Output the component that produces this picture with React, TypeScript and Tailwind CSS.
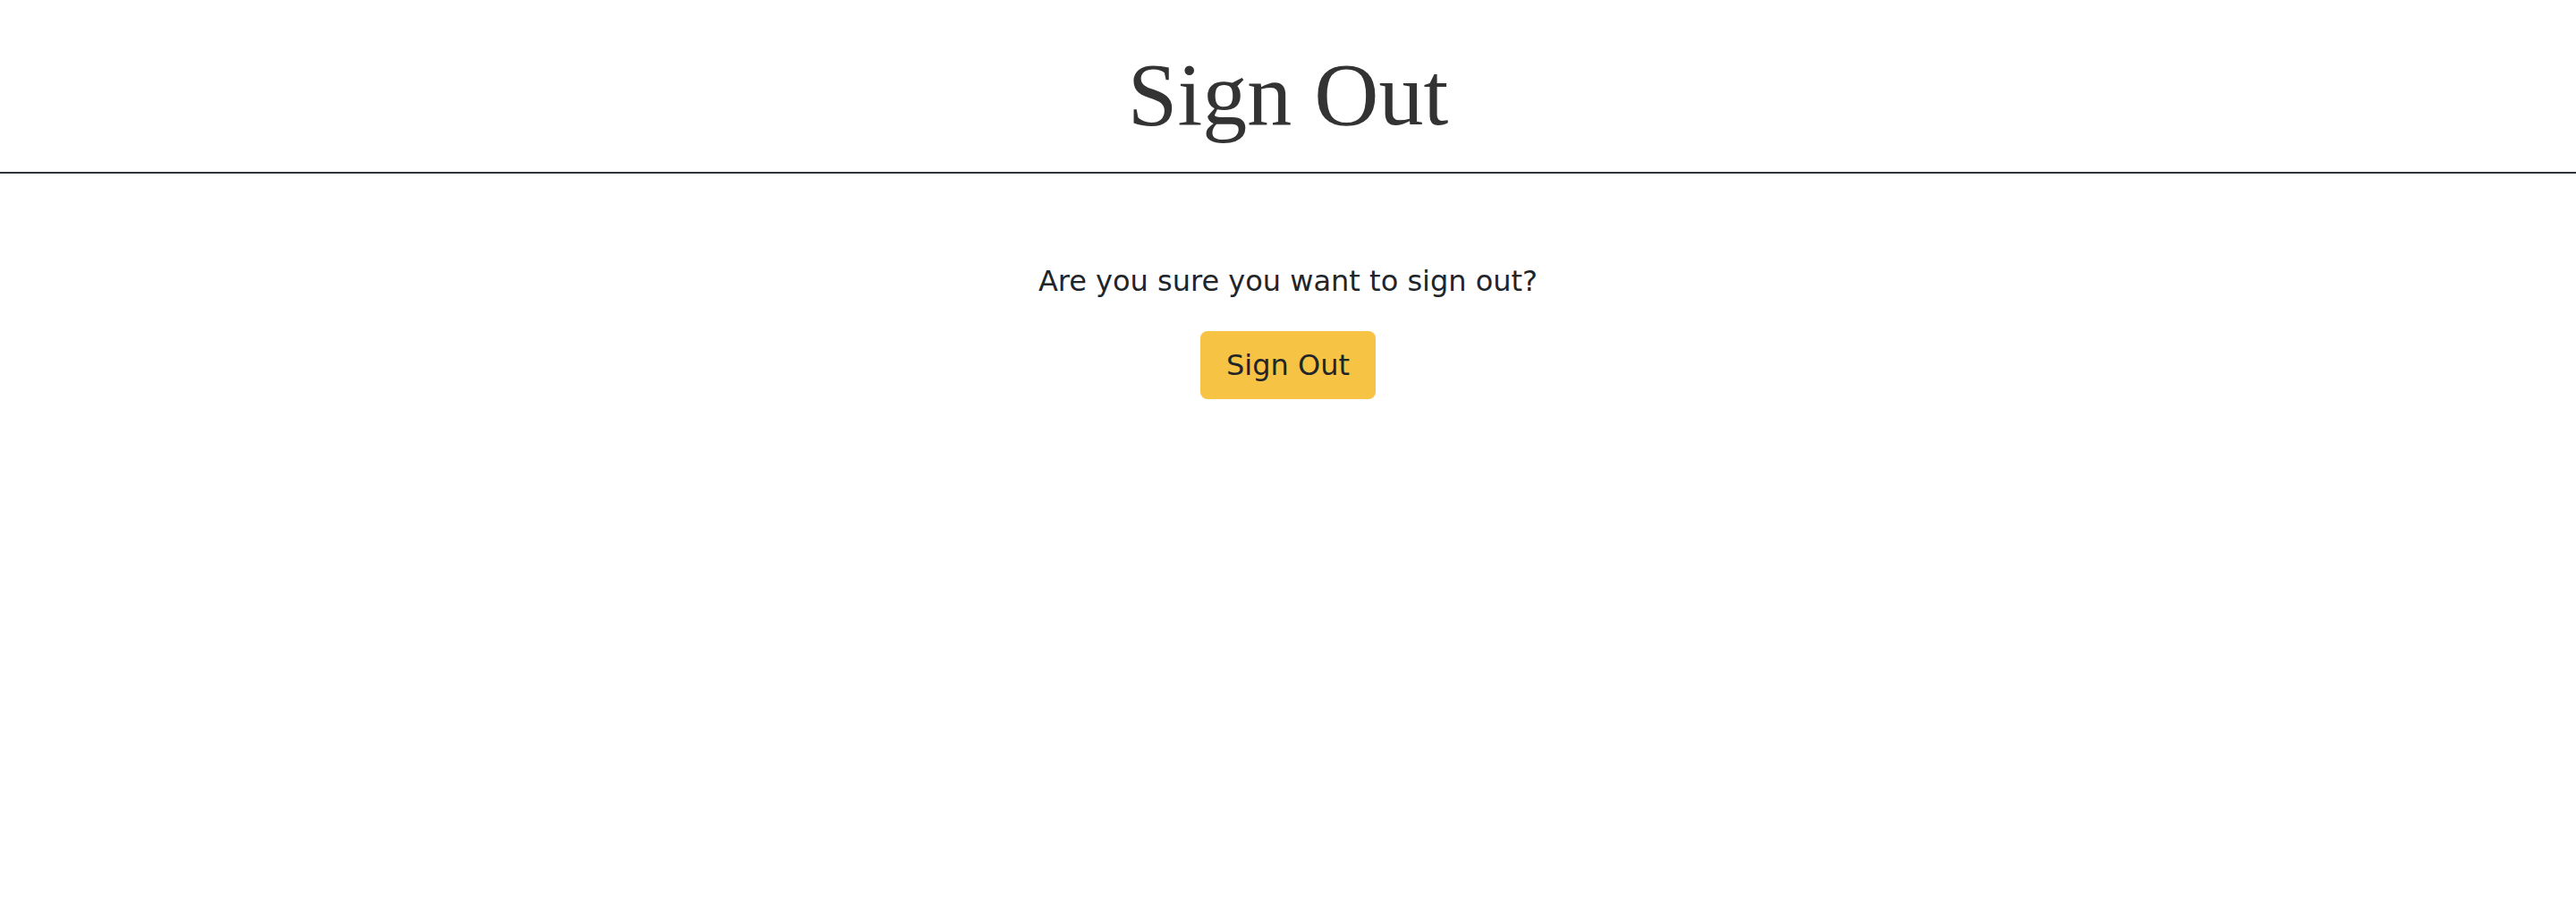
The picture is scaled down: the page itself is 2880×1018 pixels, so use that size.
export default function App() {
  return (
    <main className="min-h-screen bg-white">
      {/* Title */}
      <header className="pt-[46px] pb-[26px] text-center">
        <h1 className="text-[100px] leading-[1.2] text-[#333333] font-['Liberation_Serif',serif]">
          Sign Out
        </h1>
      </header>
      <hr className="border-0 h-[2px] bg-[#2f3237]" />
      {/* Confirm */}
      <section className="pt-[96px] flex flex-col items-center font-['DejaVu_Sans',sans-serif] text-[#212529]">
        <p className="text-[32px] leading-[48px]">Are you sure you want to sign out?</p>
        <button className="mt-[32px] w-[196px] h-[76px] flex items-center justify-center rounded-lg bg-[#f6c344] text-[32px]">
          Sign Out
        </button>
      </section>
    </main>
  );
}
